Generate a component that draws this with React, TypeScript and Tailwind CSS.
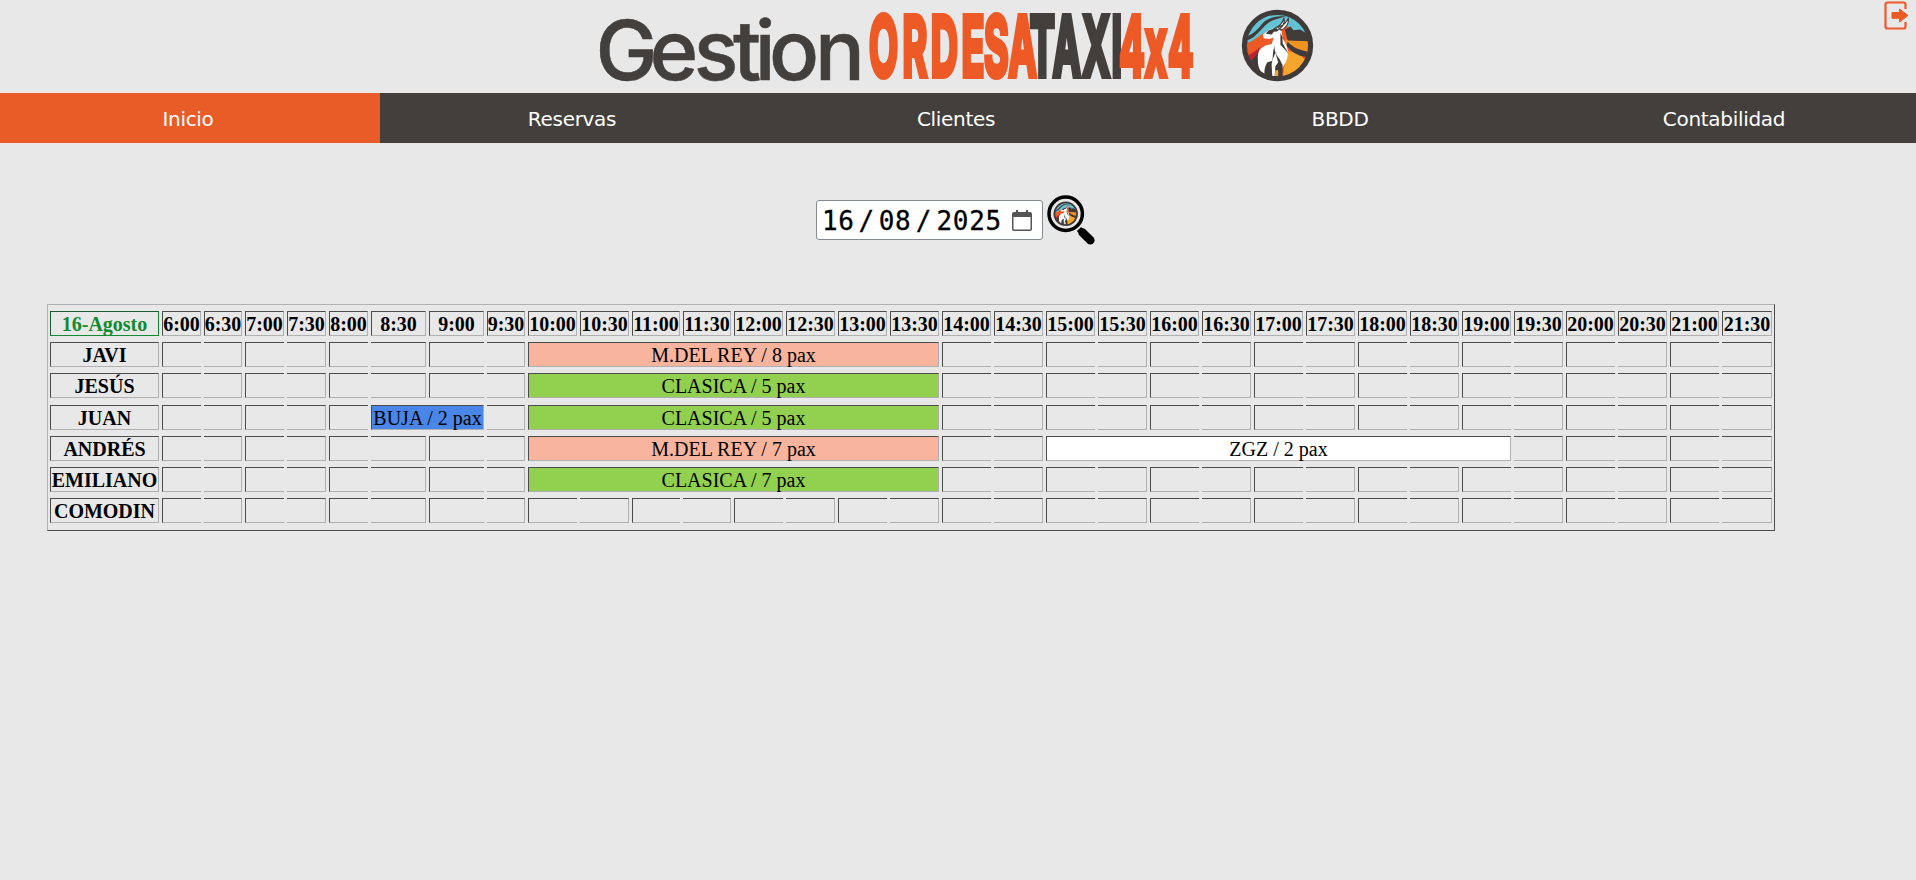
import React from "react";

type Booking = { from: number; span: number; label: string; tone: string };
type Driver = { name: string; bookings: Booking[] };

const PEACH = "bg-[#f9b49d]";
const GREEN = "bg-[#92d050]";
const BLUE = "bg-[#4a86e8]";
const WHITE = "bg-white";

const HOURS = Array.from({ length: 32 }, (_, i) => `${6 + Math.floor(i / 2)}:${i % 2 ? "30" : "00"}`);

const DRIVERS: Driver[] = [
  { name: "JAVI", bookings: [{ from: 8, span: 8, label: "M.DEL REY / 8 pax", tone: PEACH }] },
  { name: "JESÚS", bookings: [{ from: 8, span: 8, label: "CLASICA / 5 pax", tone: GREEN }] },
  {
    name: "JUAN",
    bookings: [
      { from: 5, span: 2, label: "BUJA / 2 pax", tone: BLUE },
      { from: 8, span: 8, label: "CLASICA / 5 pax", tone: GREEN },
    ],
  },
  {
    name: "ANDRÉS",
    bookings: [
      { from: 8, span: 8, label: "M.DEL REY / 7 pax", tone: PEACH },
      { from: 18, span: 9, label: "ZGZ / 2 pax", tone: WHITE },
    ],
  },
  { name: "EMILIANO", bookings: [{ from: 8, span: 8, label: "CLASICA / 7 pax", tone: GREEN }] },
  { name: "COMODIN", bookings: [] },
];

const ROW =
  "grid h-[25px] gap-x-[3px] grid-cols-[109px_39px_38px_39px_39px_39px_55px_55px_38px_49px_49px_48px_48px_repeat(19,49px)_50px]";
const CELL =
  "flex items-center justify-center whitespace-nowrap pt-px border-t-[#4c4c4c] border-l-[#4c4c4c] border-b-[#b0b0b0] border-r-[#b0b0b0] leading-[22px]";

function Goat() {
  return (
    <g>
      <circle cx="50" cy="50" r="46" fill="#ed5a26" />
      <path d="M7 40C15 17 31 5 52 5c22 0 35 13 40 29L72 32 62 22 35 31C25 35 18 43 10 46z" fill="#63c3d5" />
      <path d="M61 42l34 2-4 22-30-16z" fill="#f09322" />
      <path d="M62 57c14 2 22 8 29 16-8 12-18 20-34 23z" fill="#f6a62d" />
      <path d="M60 28l8-4 4 5 9-1 8 5 5 11-30-1z" fill="#403b39" />
      <path d="M8 43C22 38 26 28 37 19 44 14 53 13 62 10 47 10 37 11 29 20 22 29 16 34 7 38z" fill="#403b39" />
      <path d="M64 45c7 8 17 12 30 14v7C81 66 70 60 62 50z" fill="#403b39" />
      <path d="M6 67c7-7 13-7 21-16-8 16-9 27-4 38z" fill="#b92535" />
      <path d="M13 71c6-3 10-13 18-21-6 17-9 26-2 41z" fill="#403b39" />
      <path d="M23 68C22 56 29 50 42 48l3-9-6 2-8-1-1-5 9-7 9-3 7 2 2 13c5 8 8 14 7 23-1 10-6 14-8 20l1 14-13 2-12-2-4-10c-4-6-5-10-5-19z" fill="white" />
      <path d="M45 27C53 24 57 20 59 12c2 9-3 14-11 18zM51 25C59 22 63 18 65 12c1 9-4 14-10 17z" fill="white" stroke="#403b39" strokeWidth="1.6" />
      <path d="M38 29l11-3 2 4-6 1-3 4-8-1zM54 33l3 6 0 8 8 14-11-12z" fill="#403b39" />
      <path d="M46 49c-1 6 1 13 7 20l4 8v18H33c-2-9-1-15 3-22l7-2 1-12z" fill="#403b39" />
      <path d="M47 60c-3 8-5 12-5 18l1 17h3l1-16 4-6z" fill="white" />
      <path d="M47 84h4v12h-5z" fill="#f6a62d" />
      <circle cx="50" cy="50" r="45.5" fill="none" stroke="#403b39" strokeWidth="7" />
    </g>
  );
}

function Wordmark() {
  return (
    <svg width="610" height="93" viewBox="590 0 610 93" className="shrink-0 overflow-visible">
      <text
        y="79.5"
        x="626.5 674 716 747 765.3 794 840"
        fill="#433f3d"
        stroke="#433f3d"
        strokeWidth="0.5"
        textAnchor="middle"
        className="font-['Inter'] text-[83px] font-medium"
      >
        Gestion
      </text>
      <g strokeWidth="6" textAnchor="middle" transform="scale(.46 1)" className="font-['Inter'] text-[82px] font-bold">
        <text y="75.5" x="1921 1989 2053 2115 2166 2223" fill="#ed5a26" stroke="#ed5a26">ORDESA</text>
        <text y="75.5" x="2266 2319 2383 2428" fill="#433f3d" stroke="#433f3d">TAXI</text>
        <text y="75.5" x="2461 2513 2567" fill="#ed5a26" stroke="#ed5a26">4x4</text>
      </g>
    </svg>
  );
}

function Slot({ index }: { index: number }) {
  return <div className={`${CELL} ${index % 2 ? "border-y border-r" : "border-y border-l"}`} />;
}

function DriverRow({ driver }: { driver: Driver }) {
  const cells: React.ReactNode[] = [];
  let i = 0;
  while (i < HOURS.length) {
    const b = driver.bookings.find((x) => x.from === i);
    if (b) {
      cells.push(
        <div key={i} className={`${CELL} border ${b.tone}`} style={{ gridColumn: `span ${b.span}` }}>
          {b.label}
        </div>,
      );
      i += b.span;
    } else {
      cells.push(<Slot key={i} index={i} />);
      i += 1;
    }
  }
  return (
    <div className={ROW}>
      <div className={`${CELL} border font-bold`}>{driver.name}</div>
      {cells}
    </div>
  );
}

export default function App() {
  return (
    <div className="min-h-screen w-full bg-[#e8e8e8] text-black">
      <header className="flex h-[93px] items-start pl-[590px] pr-[6px]">
        <Wordmark />
        <svg width="75" height="75" viewBox="-1.5 -1.5 103 103" className="ml-[40px] mt-[8px]">
          <Goat />
        </svg>
        <svg width="26" height="32" viewBox="0 0 26 32" className="ml-auto">
          <path d="M21.500 9V4.500a2 2 0 0 0-2-2H3.500a2 2 0 0 0-2 2v22a2 2 0 0 0 2 2h16a2 2 0 0 0 2-2V22" fill="none" stroke="#ed5a26" strokeWidth="2.2" />
          <path d="M8 12.500h7.500V9l8.500 6.500-8.500 6.500v-3.700H8z" fill="#ed5a26" stroke="#ed5a26" strokeWidth="1" strokeLinejoin="round" />
        </svg>
      </header>

      <nav className="flex h-[50px] gap-1 bg-[#433f3d] font-['DejaVu_Sans',sans-serif] text-[20px] tracking-[-0.3px] text-white">
        {["Inicio", "Reservas", "Clientes", "BBDD", "Contabilidad"].map((item, i) => (
          <a
            key={item}
            className={`flex w-[380px] shrink-0 items-center justify-center pr-1 pt-[2px] ${i === 0 ? "bg-[#e95c27]" : ""}`}
          >
            {item}
          </a>
        ))}
      </nav>

      <div className="flex h-[161px] items-start pl-[816px] pt-[51px]">
        <div className="mt-[6px] flex h-[40px] w-[227px] shrink-0 items-center rounded-[3px] border border-[#858a94] bg-white pl-[5px] font-['DejaVu_Sans_Mono',monospace] text-[26px] tracking-[0.7px]">
          <div className="flex pt-[2px] [-webkit-text-stroke:0.3px_black]">
            <span>16</span>
            <span className="w-[24px] text-center">/</span>
            <span>08</span>
            <span className="w-[25px] text-center">/</span>
            <span>2025</span>
          </div>
          <svg width="20" height="21" viewBox="0 0 20 21" className="ml-[10px] shrink-0">
            <path d="M2 2h2V0h2v2h8V0h2v2h2a2 2 0 0 1 2 2v15a2 2 0 0 1-2 2H2a2 2 0 0 1-2-2V4a2 2 0 0 1 2-2zm-.5 5v11.500a1 1 0 0 0 1 1h15a1 1 0 0 0 1-1V7z" fill="#555" fillRule="evenodd" />
          </svg>
        </div>
        <svg width="50" height="52" viewBox="0 0 50 52" className="ml-[3px] mt-px">
          <path d="M33 34l4 4" stroke="black" strokeWidth="6" />
          <path d="M36.500 37.500l7.800 7.800" stroke="black" strokeWidth="8.500" strokeLinecap="round" />
          <circle cx="19.700" cy="18.800" r="16.700" fill="#e8e8e8" stroke="black" strokeWidth="3.500" />
          <g transform="translate(7.200 6.300) scale(.25)">
            <Goat />
          </g>
        </svg>
      </div>

      <div className="ml-[47px] h-[227px] w-[1728px] border border-t-[#b0b0b0] border-l-[#b0b0b0] border-b-[#4c4c4c] border-r-[#4c4c4c] pl-[2px] pt-[5.900px] font-['Liberation_Serif',serif] text-[20px]">
        <div className="flex flex-col gap-[6.250px]">
          <div className={`${ROW} font-bold`}>
            <div className="flex items-center justify-center border border-t-[#1c5c30] border-l-[#1c5c30] border-b-[#128a30] border-r-[#128a30] pt-px leading-[22px] text-[#128a30]">
              16-Agosto
            </div>
            {HOURS.map((h) => (
              <div key={h} className={`${CELL} border`}>
                {h}
              </div>
            ))}
          </div>
          {DRIVERS.map((d) => (
            <DriverRow key={d.name} driver={d} />
          ))}
        </div>
      </div>
    </div>
  );
}
